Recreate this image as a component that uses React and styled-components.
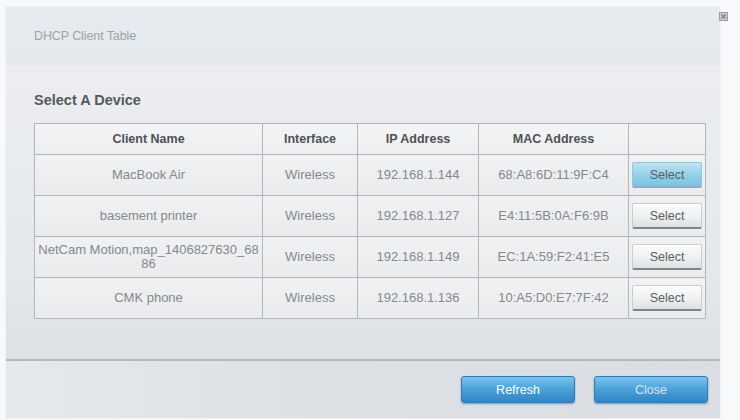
import React from 'react'
import styled, { createGlobalStyle } from 'styled-components';

const GlobalStyle = createGlobalStyle`
  html, body {
    margin: 0;
    padding: 0;
    background: #f8f9fa;
  }
  body {
    font-family: "Liberation Sans", Arial, sans-serif;
  }
`;

const Page = styled.div`
  position: relative;
  width: 740px;
  height: 420px;
  padding: 7px 20px 2px 6px;
  box-sizing: border-box;
  overflow: hidden;
`;

const CloseIcon = styled.button`
  position: absolute;
  top: 12px;
  right: 12px;
  width: 9px;
  height: 9px;
  padding: 0;
  border: none;
  background: none;
  display: flex;
`;

const Dialog = styled.div`
  display: flex;
  flex-direction: column;
  height: 100%;
  background: linear-gradient(180deg, #eaedf0 0%, #e3e6e9 100%);
  box-shadow: 0 0 2px rgba(0, 0, 0, 0.08);
`;

const Header = styled.div`
  height: 58px;
  flex: none;
  display: flex;
  align-items: center;
  padding-left: 28px;
  background: linear-gradient(180deg, #e6ebf0 0%, #e4e9ee 100%);
`;

const Title = styled.div`
  font-size: 12.5px;
  color: #9ea2a7;
  letter-spacing: -0.1px;
`;

const Body = styled.div`
  flex: 1;
  padding: 27px 15px 0 28px;
  background: linear-gradient(180deg, #ebedf0 0%, #e5e8eb 70%, #dde1e4 100%);
`;

const Heading = styled.div`
  font-size: 14.5px;
  font-weight: bold;
  color: #55595d;
  line-height: 17px;
  margin-bottom: 14px;
`;

const Table = styled.table`
  border-collapse: collapse;
  width: 671px;
  table-layout: fixed;
  border: 1px solid #b3b7bb;
  background: #eef0f2;
`;

const Th = styled.th`
  height: 30px;
  padding: 0;
  border: 1px solid #b3b7bb;
  font-size: 12.5px;
  font-weight: bold;
  color: #4e5256;
  text-align: center;
  background: linear-gradient(180deg, #f2f4f5 0%, #eceef0 100%);
`;

const Td = styled.td`
  height: 40px;
  padding: 0 2px;
  border: 1px solid #b3b7bb;
  font-size: 13px;
  line-height: 14px;
  color: #84898d;
  text-align: center;
  background: linear-gradient(180deg, #eff1f3 0%, #e9ebed 100%);
`;

const SelectButton = styled.button`
  width: 70px;
  height: 26px;
  font-family: "Liberation Sans", Arial, sans-serif;
  font-size: 12.5px;
  color: #5a5f64;
  border-radius: 2px;
  cursor: pointer;
  border: 1px solid ${p => (p.$active ? '#93c6dc' : '#c9cdd0')};
  border-bottom: 2px solid ${p => (p.$active ? '#7ab3cc' : '#80858a')};
  background: ${p =>
    p.$active
      ? 'linear-gradient(180deg, #bde6f4 0%, #8fcfe7 55%, #7cc3e0 100%)'
      : 'linear-gradient(180deg, #fbfcfc 0%, #eef0f1 55%, #dde0e2 100%)'};
`;

const Footer = styled.div`
  height: 57px;
  flex: none;
  border-top: 2px solid #b4b8bc;
  display: flex;
  align-items: center;
  justify-content: flex-end;
  gap: 19px;
  padding-right: 12px;
  background: linear-gradient(90deg, #e6e9ec 0%, #dde1e4 40%, #dadee2 100%);
`;

const ActionButton = styled.button`
  width: 114px;
  height: 27px;
  border: 1px solid #2f7db8;
  border-radius: 3px;
  font-family: "Liberation Sans", Arial, sans-serif;
  font-size: 12.5px;
  color: ${p => (p.$dim ? '#d2e6f4' : '#ffffff')};
  background: linear-gradient(180deg, #79c4ec 0%, #4ea3da 45%, #2f86c6 100%);
  box-shadow: 0 1px 2px rgba(0, 0, 0, 0.35);
  cursor: pointer;
`;

const clients = [
  { name: 'MacBook Air', iface: 'Wireless', ip: '192.168.1.144', mac: '68:A8:6D:11:9F:C4' },
  { name: 'basement printer', iface: 'Wireless', ip: '192.168.1.127', mac: 'E4:11:5B:0A:F6:9B' },
  { name: ['NetCam Motion,map_1406827630_68', <br key="br" />, '86'], iface: 'Wireless', ip: '192.168.1.149', mac: 'EC:1A:59:F2:41:E5' },
  { name: 'CMK phone', iface: 'Wireless', ip: '192.168.1.136', mac: '10:A5:D0:E7:7F:42' },
];

function App() {
  return (
    <>
      <GlobalStyle />
      <Page>
        <CloseIcon aria-label="close">
          <svg width="9" height="9" viewBox="0 0 9 9">
            <rect x="0.5" y="0.5" width="8" height="8" fill="#c9cdd1" stroke="#9a9fa4" />
            <path d="M2.3 2.3 L6.7 6.7 M6.7 2.3 L2.3 6.7" stroke="#6f7479" strokeWidth="1.1" />
          </svg>
        </CloseIcon>
        <Dialog>
          <Header>
            <Title>DHCP Client Table</Title>
          </Header>
          <Body>
            <Heading>Select A Device</Heading>
            <Table>
              <colgroup>
                <col style={{ width: 228 }} />
                <col style={{ width: 95 }} />
                <col style={{ width: 121 }} />
                <col style={{ width: 150 }} />
                <col style={{ width: 77 }} />
              </colgroup>
              <thead>
                <tr>
                  <Th>Client Name</Th>
                  <Th>Interface</Th>
                  <Th>IP Address</Th>
                  <Th>MAC Address</Th>
                  <Th />
                </tr>
              </thead>
              <tbody>
                {clients.map((c, i) => (
                  <tr key={i}>
                    <Td>{c.name}</Td>
                    <Td>{c.iface}</Td>
                    <Td>{c.ip}</Td>
                    <Td>{c.mac}</Td>
                    <Td>
                      <SelectButton $active={i === 0}>Select</SelectButton>
                    </Td>
                  </tr>
                ))}
              </tbody>
            </Table>
          </Body>
          <Footer>
            <ActionButton>Refresh</ActionButton>
            <ActionButton $dim>Close</ActionButton>
          </Footer>
        </Dialog>
      </Page>
    </>
  )
}

export default App
